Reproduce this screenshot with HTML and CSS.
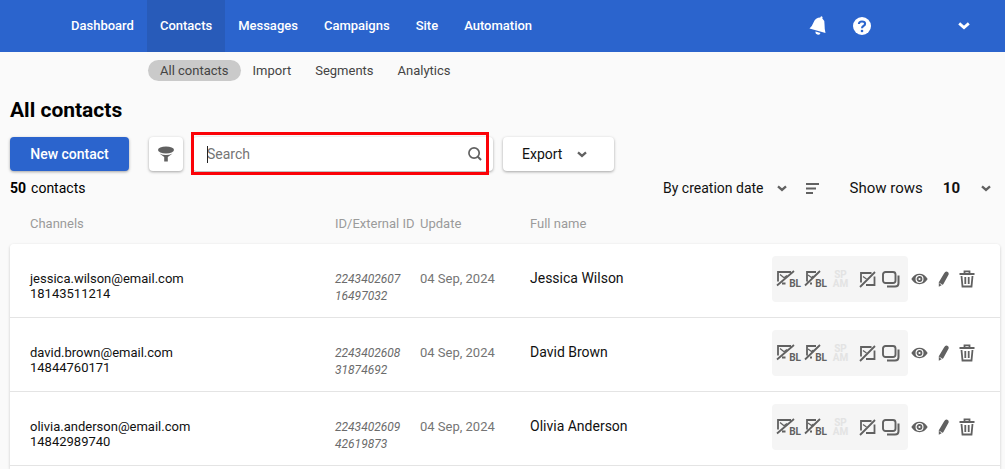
FILE: index.html
```html
<!DOCTYPE html>
<html lang="en">
<head>
<meta charset="utf-8">
<title>All contacts</title>
<link rel="stylesheet" href="styles.css">
</head>
<body>
<svg class="sprite" aria-hidden="true">
  <symbol id="chevron" viewBox="0 0 12 8"><path d="M1.2 1.4 6 5.600l4.800-4.200" fill="none" stroke="currentColor" stroke-width="2.800"/></symbol>
  <symbol id="mail-off" viewBox="0 0 19 18">
    <path d="M15 2H2v9.500M1 15.500 18 1M6 13.500h3.500" fill="none" stroke="currentColor" stroke-width="1.800"/>
    <path d="M4 4.500l4 3.200 3-2.200" fill="none" stroke="currentColor" stroke-width="1.300"/>
  </symbol>
  <symbol id="phone-off" viewBox="0 0 17 18">
    <path d="M12 2H3v9.500M1 15.500 16 1M6 13.500h2" fill="none" stroke="currentColor" stroke-width="1.800"/>
    <path d="M4 5l3.500 2.500 2-1.500" fill="none" stroke="currentColor" stroke-width="1.300"/>
  </symbol>
  <symbol id="chat-off" viewBox="0 0 17 17">
    <path d="M12.500 2H2v9.500M7 14h8.500V5.500M1 16 16 1" fill="none" stroke="currentColor" stroke-width="1.800"/>
    <path d="M4 5.500l3.500 2.500" fill="none" stroke="currentColor" stroke-width="1.300"/>
  </symbol>
  <symbol id="stack" viewBox="0 0 18 17">
    <rect x="1" y="1" width="12.500" height="11" rx="2.500" fill="none" stroke="currentColor" stroke-width="1.900"/>
    <path d="M16.500 4.500V12q0 3.500-3.500 3.500H5" fill="none" stroke="currentColor" stroke-width="2"/>
  </symbol>
  <symbol id="eye" viewBox="0 0 17 12">
    <path fill-rule="evenodd" d="M.3 6Q3.500.8 8.500.8T16.700 6Q13.500 11.200 8.500 11.200T.3 6M8.500 2a4 4 0 1 0 0 8 4 4 0 0 0 0-8" fill="currentColor"/>
    <circle cx="8.500" cy="6" r="2" fill="none" stroke="currentColor" stroke-width="1.800"/>
  </symbol>
  <symbol id="pencil" viewBox="0 0 11 16">
    <path d="M6 2.500Q7.500-.2 9.300.7 11.300 1.700 10.500 3.800L5.300 13.200.8 15.700.8 11.300z" fill="currentColor"/>
    <path d="m1.500 12.300 2.600 1.500" stroke="#fff" stroke-width=".8"/>
  </symbol>
  <symbol id="trash" viewBox="0 0 16 18">
    <path d="M.5 4h15M5.500 3.700V1.300h5v2.400M2.500 6 3.500 16.500h9l1-10.500M6.300 7v7M9.700 7v7" fill="none" stroke="currentColor" stroke-width="1.800"/>
  </symbol>
</svg>

<header class="topbar">
  <nav class="mainnav" aria-label="Main">
    <a href="#">Dashboard</a>
    <a href="#" class="active" aria-current="page">Contacts</a>
    <a href="#">Messages</a>
    <a href="#">Campaigns</a>
    <a href="#">Site</a>
    <a href="#">Automation</a>
  </nav>
  <div class="tools">
    <button type="button" aria-label="Notifications">
      <svg width="18" height="20" viewBox="0 0 18 20"><path d="M11.300 1.500Q12-.2 13 .5t.2 1.800Q15.500 4 15.500 8q0 5 1 9L.5 12.500q2.500-2 4-6Q6.500 1.500 11.300 1.500M6.500 15.500l5 1.400Q10.500 19.300 8.300 18.600T6.500 15.500" fill="currentColor"/></svg>
    </button>
    <button type="button" aria-label="Help">
      <svg width="18" height="18" viewBox="0 0 18 18"><circle cx="9" cy="9" r="9" fill="currentColor"/><path d="M5.900 7Q6 4.500 9 4.500t3.100 2.200Q12.100 8 10.700 8.700 9 9.500 9 11.200" fill="none" stroke="#2b64cd" stroke-width="2.100"/><circle cx="9" cy="14" r="1.300" fill="#2b64cd"/></svg>
    </button>
    <button type="button" class="account" aria-label="Account menu"><svg class="chevron large"><use href="#chevron"/></svg></button>
  </div>
</header>

<nav class="subnav" aria-label="Contacts">
  <a href="#" class="active" aria-current="page">All contacts</a>
  <a href="#">Import</a>
  <a href="#">Segments</a>
  <a href="#">Analytics</a>
</nav>

<main class="page">
  <h1>All contacts</h1>

  <div class="actions">
    <button type="button" class="button primary">New contact</button>
    <button type="button" class="button filter" aria-label="Filter">
      <svg width="16" height="16" viewBox="0 0 16 16"><ellipse cx="8" cy="4" rx="8" ry="3.400" fill="currentColor"/><path d="M1.500 7.500Q8 10.500 14.500 7.500L9.800 11v4.500H6.200V11z" fill="currentColor"/></svg>
    </button>
    <div class="search">
      <input type="text" placeholder="Search" aria-label="Search contacts" autofocus>
      <svg width="14" height="14" viewBox="0 0 15 15"><circle cx="6.500" cy="6.500" r="5.500" fill="none" stroke="currentColor" stroke-width="1.800"/><path d="m10.500 10.500 3.500 3.300" stroke="currentColor" stroke-width="2.200"/></svg>
      <span class="caret"></span>
      <span class="highlight"></span>
    </div>
    <button type="button" class="button export">Export <svg class="chevron"><use href="#chevron"/></svg></button>
  </div>

  <div class="summary">
    <p><strong>50</strong> contacts</p>
    <div class="sorting">
      <button type="button" class="plain">By creation date <svg class="chevron"><use href="#chevron"/></svg></button>
      <button type="button" class="plain order" aria-label="Sort order">
        <svg width="13" height="11" viewBox="0 0 13 11"><path d="M0 1h13M0 5.500h10M0 10h7" stroke="currentColor" stroke-width="1.800"/></svg>
      </button>
      <span class="rows-label">Show rows</span>
      <button type="button" class="plain rows"><strong>10</strong> <svg class="chevron"><use href="#chevron"/></svg></button>
    </div>
  </div>

  <table class="contacts">
    <thead>
      <tr><th class="col-channels">Channels</th><th class="col-id">ID/External ID</th><th class="col-update">Update</th><th>Full name</th><th class="col-tools"></th></tr>
    </thead>
    <tbody>
      <tr>
        <td class="channels">jessica.wilson@email.com<br>18143511214</td>
        <td class="id">2243402607<br>16497032</td>
        <td class="update">04 Sep, 2024</td>
        <td class="name">Jessica Wilson</td>
        <td><div class="row-tools">
          <div class="group">
            <button type="button" class="mail" aria-label="Blacklist email"><svg width="19" height="18"><use href="#mail-off"/></svg><span class="tag">BL</span></button>
            <button type="button" class="phone" aria-label="Blacklist phone"><svg width="17" height="18"><use href="#phone-off"/></svg><span class="tag">BL</span></button>
            <button type="button" class="spam" disabled>SP<br>AM</button>
            <button type="button" class="chat" aria-label="Unsubscribe"><svg width="17" height="17"><use href="#chat-off"/></svg></button>
            <button type="button" aria-label="Copy"><svg width="18" height="17"><use href="#stack"/></svg></button>
          </div>
          <button type="button" class="view" aria-label="View"><svg width="17" height="12"><use href="#eye"/></svg></button>
          <button type="button" aria-label="Edit"><svg width="11" height="16"><use href="#pencil"/></svg></button>
          <button type="button" aria-label="Delete"><svg width="16" height="18"><use href="#trash"/></svg></button>
        </div></td>
      </tr>
      <tr>
        <td class="channels">david.brown@email.com<br>14844760171</td>
        <td class="id">2243402608<br>31874692</td>
        <td class="update">04 Sep, 2024</td>
        <td class="name">David Brown</td>
        <td><div class="row-tools">
          <div class="group">
            <button type="button" class="mail" aria-label="Blacklist email"><svg width="19" height="18"><use href="#mail-off"/></svg><span class="tag">BL</span></button>
            <button type="button" class="phone" aria-label="Blacklist phone"><svg width="17" height="18"><use href="#phone-off"/></svg><span class="tag">BL</span></button>
            <button type="button" class="spam" disabled>SP<br>AM</button>
            <button type="button" class="chat" aria-label="Unsubscribe"><svg width="17" height="17"><use href="#chat-off"/></svg></button>
            <button type="button" aria-label="Copy"><svg width="18" height="17"><use href="#stack"/></svg></button>
          </div>
          <button type="button" class="view" aria-label="View"><svg width="17" height="12"><use href="#eye"/></svg></button>
          <button type="button" aria-label="Edit"><svg width="11" height="16"><use href="#pencil"/></svg></button>
          <button type="button" aria-label="Delete"><svg width="16" height="18"><use href="#trash"/></svg></button>
        </div></td>
      </tr>
      <tr>
        <td class="channels">olivia.anderson@email.com<br>14842989740</td>
        <td class="id">2243402609<br>42619873</td>
        <td class="update">04 Sep, 2024</td>
        <td class="name">Olivia Anderson</td>
        <td><div class="row-tools">
          <div class="group">
            <button type="button" class="mail" aria-label="Blacklist email"><svg width="19" height="18"><use href="#mail-off"/></svg><span class="tag">BL</span></button>
            <button type="button" class="phone" aria-label="Blacklist phone"><svg width="17" height="18"><use href="#phone-off"/></svg><span class="tag">BL</span></button>
            <button type="button" class="spam" disabled>SP<br>AM</button>
            <button type="button" class="chat" aria-label="Unsubscribe"><svg width="17" height="17"><use href="#chat-off"/></svg></button>
            <button type="button" aria-label="Copy"><svg width="18" height="17"><use href="#stack"/></svg></button>
          </div>
          <button type="button" class="view" aria-label="View"><svg width="17" height="12"><use href="#eye"/></svg></button>
          <button type="button" aria-label="Edit"><svg width="11" height="16"><use href="#pencil"/></svg></button>
          <button type="button" aria-label="Delete"><svg width="16" height="18"><use href="#trash"/></svg></button>
        </div></td>
      </tr>
      <tr class="end"><td colspan="5"></td></tr>
    </tbody>
  </table>
</main>
</body>
</html>
```
FILE: styles.css
```css
* { box-sizing: border-box; }
body {
  margin: 0;
  background: #fafafa;
  color: #111;
  font: 14px/20px Roboto, "Liberation Sans", sans-serif;
}
a { color: inherit; text-decoration: none; }
button, input { font: inherit; color: inherit; }
button { margin: 0; padding: 0; border: 0; background: none; cursor: pointer; }
svg { display: block; flex: none; }
strong { font-weight: 700; }
.sprite { position: absolute; width: 0; height: 0; }
.chevron { width: 10px; height: 7px; color: #616161; }
.chevron.large { width: 12px; height: 8px; color: #fff; }

.topbar {
  display: flex;
  justify-content: space-between;
  height: 52px;
  padding: 0 35px 0 58px;
  background: #2b64cd;
  color: #fff;
}
.mainnav { display: flex; font-size: 13px; font-weight: 500; }
.mainnav a { display: flex; align-items: center; padding: 0 13px; }
.mainnav .active { background: #285bb9; }
.tools { display: flex; align-items: center; gap: 26px; }
.account { margin-left: 61px; }

.subnav {
  display: flex;
  padding: 8px 148px 0;
  color: #444;
  font-size: 13px;
  line-height: 21px;
}
.subnav a { padding: 0 12px; border-radius: 11px; }
.subnav .active { background: #cacaca; }

.page { padding: 0 5px 0 10px; }
h1 { margin: 15px 0 13px; color: #000; font-size: 21px; line-height: 28px; font-weight: 700; }

.actions { display: flex; align-items: center; }
.button {
  display: flex;
  align-items: center;
  justify-content: center;
  height: 34px;
  border-radius: 4px;
  background: #fff;
  box-shadow: 0 1px 3px rgba(0, 0, 0, .35);
}
.primary { width: 119px; margin-right: 20px; background: #2b64cd; color: #fff; font-weight: 500; }
.filter { width: 34px; margin-right: 10px; color: #616161; }
.search {
  position: relative;
  display: flex;
  align-items: center;
  width: 300px;
  height: 34px;
  margin-right: 10px;
  padding: 0 11px 0 14px;
  border-radius: 4px;
  background: #fff;
  box-shadow: 0 1px 3px rgba(0, 0, 0, .35);
  color: #616161;
}
.search input { flex: 1; min-width: 0; padding: 0; border: 0; outline: 0; background: none; caret-color: transparent; }
.search input::placeholder { color: #757575; }
.caret { position: absolute; left: 14px; top: 9px; width: 1px; height: 17px; background: #222; }
.highlight { position: absolute; inset: -5px 4px -4px -2px; border: 3px solid #fb0207; }
.export { gap: 15px; padding: 0 27px 0 19px; }

.summary { display: flex; justify-content: space-between; align-items: center; padding: 7px 9px 0 0; }
.summary p { display: flex; gap: 5px; margin: 0; color: #000; }
.sorting { display: flex; align-items: center; }
.plain { display: flex; align-items: center; gap: 13px; }
.order { margin: 0 31px 0 19px; color: #616161; }
.rows-label { font-size: 15px; }
.rows { gap: 21px; margin-left: 20px; font-size: 15px; }

.contacts { width: 100%; margin-top: 15px; border-spacing: 0; table-layout: fixed; }
th { height: 31px; padding: 0 0 10px; color: #9b9b9b; font-size: 13px; font-weight: 400; text-align: left; white-space: nowrap; }
th.col-channels { width: 325px; padding-left: 20px; }
.col-id { width: 85px; }
.col-update { width: 110px; }
.col-tools { width: 228px; }
tbody { border-radius: 4px 4px 0 0; box-shadow: 0 1px 3px rgba(0, 0, 0, .2); }
td { height: 74px; padding: 12px 0 0; border-bottom: 1px solid #e4e4e4; background: #fff; vertical-align: top; }
tbody tr:first-child td:first-child { border-top-left-radius: 4px; }
tbody tr:first-child td:last-child { border-top-right-radius: 4px; }
.end td { height: 3px; padding: 0; border: 0; }
td.channels { padding: 27px 0 0 20px; font-size: 13px; line-height: 15px; }
td.id { padding-top: 27px; color: #6b6b6b; font-size: 12px; line-height: 17px; font-style: italic; }
td.update { padding-top: 25px; color: #757575; font-size: 13px; }
td.name { padding-top: 24px; }

.row-tools { display: flex; align-items: center; gap: 10px; color: #616161; }
.group { display: flex; align-items: center; gap: 3px; height: 46px; padding: 0 8px 0 4px; border-radius: 4px; background: #f5f5f5; }
.mail, .phone { position: relative; width: 25px; }
.phone { width: 23px; }
.tag { position: absolute; right: 0; bottom: 0; font-size: 10px; line-height: 9px; font-weight: 700; }
.spam { width: 17px; margin: 0 7px 0 2px; color: #e3e3e3; font-size: 10px; line-height: 9px; font-weight: 700; }
.chat { margin-right: 3px; }
.group + .view { margin-left: -7px; }
```
